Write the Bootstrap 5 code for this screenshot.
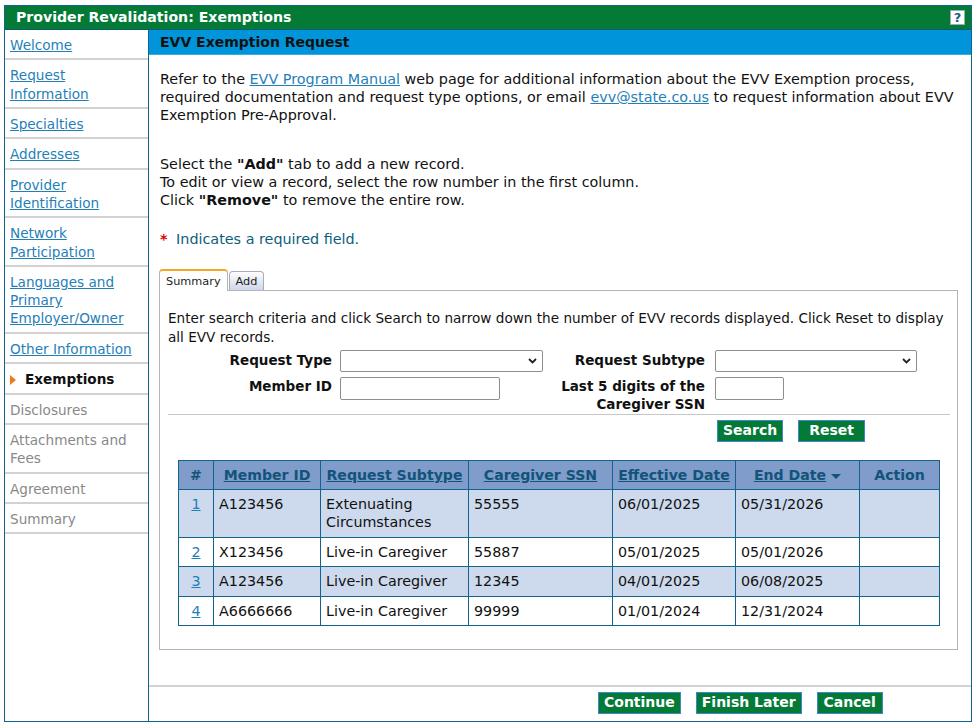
<!DOCTYPE html>
<html lang="en">
<head>
<meta charset="utf-8">
<title>Provider Revalidation: Exemptions</title>
<link href="https://cdn.jsdelivr.net/npm/bootstrap@5.3.0/dist/css/bootstrap.min.css" rel="stylesheet">
<style>
html,body{height:100%;background:#fff}
body{font-family:"DejaVu Sans","Liberation Sans",sans-serif;font-size:13.6px;line-height:18.2px;color:#111;padding:5px 3px 3px 4px}
a{color:#1f7fb8}
.shell{border:1px solid #12648c;height:717px;width:968px}
.topbar{background:#047a37;color:#fff;font-weight:700;font-size:14.1px;height:24px;padding:0 6px 0 11px;border-bottom:1px solid #0c5a6e}
.helpbox{width:15px;height:15px;background:#fff;border:1px solid #9ab;color:#17608a;font-size:13px;line-height:13px;text-align:center;font-weight:700}
.sidenav{width:144px;border-right:1px solid #12648c;flex:none}
.sideitem{padding:6px 5px 4.2px;border-bottom:2px solid #d2d2d2;margin:0;display:block}
.sideitem.off{color:#888}
.sideitem.cur{font-weight:700;color:#111;padding-left:5px}
.curmark{display:inline-block;width:0;height:0;border-left:6px solid #ee7a1c;border-top:5px solid transparent;border-bottom:5px solid transparent;margin-right:9px;vertical-align:-1px}
.bluehead{background:#0094da;height:25px;padding:0 11px;font-weight:700;font-size:14px;color:#111;border-bottom:1px solid #3ea9e0}
.bodyzone{padding:15px 11px 0 11px}
.introtext{margin:0;font-size:14.35px}
.selecttext{margin:30px 0 0}
.reqnote{color:#0c5d7c;margin:21px 0 0}
.star{color:#d00;font-weight:700;margin-right:4px}
.tabrow{margin:21px 0 0 -1px;height:21px;font-size:11.3px}
.tabon{border:1px solid #b5b5b5;border-top:2px solid #f5a623;border-bottom:0;border-radius:4px 4px 0 0;background:#fff;padding:0 6px;height:22px;line-height:22px;position:relative;z-index:1;color:#222}
.taboff{border:1px solid #aab;border-bottom:0;border-radius:4px 4px 0 0;background:linear-gradient(#fff,#cfd5ea);padding:0 6px;margin-left:1px;height:19px;line-height:19px;align-self:flex-end;color:#222}
.tabpanel{border:1px solid #b5b5b5;margin-left:-1px;width:799px;height:360px;padding:18px 8px 0 8px}
.searchhelp{margin:0}
.fieldgrid{display:grid;grid-template-columns:164px 203px 156px 202px;column-gap:8px;align-items:start}
.fieldlabel{font-weight:700;text-align:right;line-height:18.2px;font-size:13.5px}
.labelfirst{padding-top:1px}
.labelsecond{padding-right:2px}
.fakeselect{height:22px;border:1px solid #8e8e8e;border-radius:2px;background:#fff;padding:0 5px;display:flex;justify-content:flex-end;align-items:center}
.faketext{height:23px;border:1px solid #8e8e8e;border-radius:2px;background:#fff;display:block;padding:0}
.w160{width:160px}.w69{width:69px}
.rowgap{margin-top:5px}
.rule{border-top:1px solid #c6c6c6;margin-top:1px;width:782px}
.gbtn{background:#047a37;color:#fff;font-weight:700;font-size:14px;border:1px solid #3f86cf;border-radius:0;height:22px;line-height:19px;padding:0 5px;display:inline-block}
.gbtnwide{padding:0 10px}
.gbtnmid{padding:0 6px}
.searchrow{margin-top:5px;padding-left:549px;gap:15px;height:22px}
.recs{border-collapse:collapse;margin:18px 0 0 10px;width:761px;table-layout:fixed;font-size:14.3px}
.recs th,.recs td{border:1px solid #12648c;vertical-align:top;font-weight:400}
.recs th{background:#7f9ccb;height:29px;text-align:center;vertical-align:middle;font-weight:700;color:#12537a;padding:0;white-space:nowrap;font-size:14.1px}
.recs th a{color:#12537a}
.recs td{padding:5px 5px 5.300px;color:#111}
.recs tr.shade td{background:#cdd9ec}
.recs td.num{text-align:center}
.sortcaret{display:inline-block;width:0;height:0;border-top:5px solid #12537a;border-left:5px solid transparent;border-right:5px solid transparent;margin-left:5px;vertical-align:1px}
.footbar{border-top:2px solid #d2d2d2;height:36px;padding:5px 0 0 449px;gap:15px;margin-top:auto}
.mainzone{min-width:0;display:flex;flex-direction:column}
</style>
</head>
<body>
<div class="shell d-flex flex-column">
  <div class="topbar d-flex align-items-center justify-content-between">
    <span>Provider Revalidation: Exemptions</span>
    <span class="helpbox">?</span>
  </div>
  <div class="d-flex flex-grow-1">
    <nav class="sidenav">
      <a class="sideitem" href="#">Welcome</a>
      <a class="sideitem" href="#">Request Information</a>
      <a class="sideitem" href="#">Specialties</a>
      <a class="sideitem" href="#">Addresses</a>
      <a class="sideitem" href="#">Provider Identification</a>
      <a class="sideitem" href="#">Network Participation</a>
      <a class="sideitem" href="#">Languages and Primary Employer/Owner</a>
      <a class="sideitem" href="#">Other Information</a>
      <div class="sideitem cur"><span class="curmark"></span>Exemptions</div>
      <div class="sideitem off">Disclosures</div>
      <div class="sideitem off">Attachments and Fees</div>
      <div class="sideitem off">Agreement</div>
      <div class="sideitem off">Summary</div>
    </nav>
    <main class="mainzone flex-grow-1">
      <div class="bluehead d-flex align-items-center">EVV Exemption Request</div>
      <div class="bodyzone">
        <p class="introtext">Refer to the <a href="#">EVV Program Manual</a> web page for additional information about the EVV Exemption process, required documentation and request type options, or email <a href="#">evv@state.co.us</a> to request information about EVV Exemption Pre-Approval.</p>
        <p class="introtext selecttext">Select the <b>"Add"</b> tab to add a new record.<br>To edit or view a record, select the row number in the first column.<br>Click <b>"Remove"</b> to remove the entire row.</p>
        <p class="introtext reqnote"><span class="star">*</span> Indicates a required field.</p>
        <div class="tabrow d-flex">
          <span class="tabon">Summary</span>
          <span class="taboff">Add</span>
        </div>
        <div class="tabpanel">
          <p class="searchhelp">Enter search criteria and click Search to narrow down the number of EVV records displayed. Click Reset to display all EVV records.</p>
          <div class="fieldgrid mt-1">
            <div class="fieldlabel labelfirst">Request Type</div>
            <div class="fakeselect"><svg width="9" height="6" viewBox="0 0 9 6"><path d="M1 1l3.500 3.500L8 1" fill="none" stroke="#222" stroke-width="1.800"/></svg></div>
            <div class="fieldlabel labelfirst labelsecond">Request Subtype</div>
            <div class="fakeselect"><svg width="9" height="6" viewBox="0 0 9 6"><path d="M1 1l3.500 3.500L8 1" fill="none" stroke="#222" stroke-width="1.800"/></svg></div>
            <div class="fieldlabel rowgap">Member ID</div>
            <div class="faketext w160 rowgap"></div>
            <div class="fieldlabel labelsecond rowgap">Last 5 digits of the Caregiver SSN</div>
            <div class="faketext w69 rowgap"></div>
          </div>
          <div class="rule"></div>
          <div class="searchrow d-flex">
            <span class="gbtn">Search</span>
            <span class="gbtn gbtnwide">Reset</span>
          </div>
          <table class="recs">
            <colgroup><col style="width:35px"><col style="width:107px"><col style="width:148px"><col style="width:144px"><col style="width:123px"><col style="width:124px"><col style="width:80px"></colgroup>
            <thead><tr><th>#</th><th><a href="#">Member ID</a></th><th><a href="#">Request Subtype</a></th><th><a href="#">Caregiver SSN</a></th><th><a href="#">Effective Date</a></th><th><a href="#">End Date</a><span class="sortcaret"></span></th><th>Action</th></tr></thead>
            <tbody>
              <tr class="shade"><td class="num"><a href="#">1</a></td><td>A123456</td><td>Extenuating Circumstances</td><td>55555</td><td>06/01/2025</td><td>05/31/2026</td><td></td></tr>
              <tr><td class="num"><a href="#">2</a></td><td>X123456</td><td>Live-in Caregiver</td><td>55887</td><td>05/01/2025</td><td>05/01/2026</td><td></td></tr>
              <tr class="shade"><td class="num"><a href="#">3</a></td><td>A123456</td><td>Live-in Caregiver</td><td>12345</td><td>04/01/2025</td><td>06/08/2025</td><td></td></tr>
              <tr><td class="num"><a href="#">4</a></td><td>A6666666</td><td>Live-in Caregiver</td><td>99999</td><td>01/01/2024</td><td>12/31/2024</td><td></td></tr>
            </tbody>
          </table>
        </div>
      </div>
      <div class="footbar d-flex">
        <span class="gbtn">Continue</span>
        <span class="gbtn">Finish Later</span>
        <span class="gbtn gbtnmid">Cancel</span>
      </div>
    </main>
  </div>
</div>
<script src="https://cdn.jsdelivr.net/npm/bootstrap@5.3.0/dist/js/bootstrap.bundle.min.js"></script>
</body>
</html>
